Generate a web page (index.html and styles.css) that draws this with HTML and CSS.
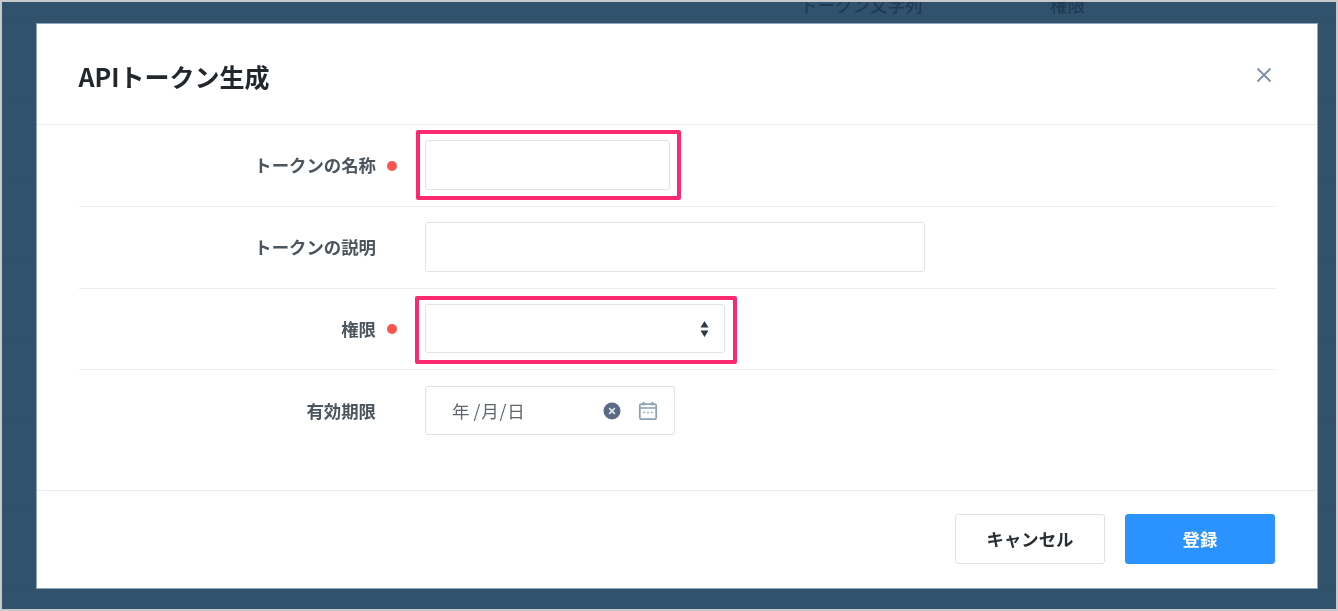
FILE: index.html
```html
<!DOCTYPE html>
<html lang="ja">
<head>
<meta charset="utf-8">
<title>APIトークン生成</title>
<link rel="stylesheet" href="styles.css">
</head>
<body>
<div class="screen">
  <div class="backdrop">
    <div class="table-head"><span class="col-token">トークン文字列</span><span class="col-perm">権限</span></div>
    <div class="table-row"></div>
    <div class="table-row"></div>
    <div class="table-row"></div>
    <div class="table-row"></div>
    <div class="table-row"></div>
    <div class="table-row"></div>
    <div class="table-row"></div>
  </div>
  <section class="modal">
    <header class="modal-head">
      <h1 class="modal-title">APIトークン生成</h1>
      <svg class="close" viewBox="0 0 16 16" width="16" height="16"><path d="M1.5 1.5 14.5 14.5M14.5 1.5 1.5 14.5" fill="none" stroke="currentColor" stroke-width="1.9"/></svg>
    </header>
    <div class="form">
      <div class="row">
        <div class="label"><span>トークンの名称</span><i class="req"></i></div>
        <div class="field field-name"></div>
        <div class="mark mark-name"></div>
      </div>
      <div class="row">
        <div class="label"><span>トークンの説明</span></div>
        <div class="field field-desc"></div>
      </div>
      <div class="row">
        <div class="label"><span>権限</span><i class="req"></i></div>
        <div class="field field-select">
          <svg class="updown" viewBox="0 0 9 16" width="9" height="16"><path d="M4.5 0 8.5 6.5H.5ZM.5 9.5H8.5L4.5 16Z" fill="currentColor"/></svg>
        </div>
        <div class="mark mark-select"></div>
      </div>
      <div class="row row-last">
        <div class="label"><span>有効期限</span></div>
        <div class="field field-date">
          <span class="date-text">年 /月/日</span>
          <svg class="date-clear" viewBox="0 0 18 18" width="18" height="18"><circle cx="9" cy="9" r="8.5" fill="#5b6a85"/><path d="M6.2 6.2 11.8 11.8M11.8 6.2 6.2 11.8" stroke="#dfe5ec" stroke-width="1.7" fill="none"/></svg>
          <svg class="date-cal" viewBox="0 0 20 20" width="20" height="20"><rect x="1.8" y="3.2" width="16.4" height="15" rx="1.5" fill="none" stroke="currentColor" stroke-width="1.7"/><path d="M1.8 7H18.2M5.6 .8V4.5M14.4 .8V4.5" fill="none" stroke="currentColor" stroke-width="1.7"/><path d="M5.5 11.5H7M9.2 11.5H10.8M13 11.5H14.5" fill="none" stroke="currentColor" stroke-width="1.4"/></svg>
        </div>
      </div>
    </div>
    <footer class="modal-foot">
      <button class="btn btn-cancel" type="button">キャンセル</button>
      <button class="btn btn-submit" type="button">登録</button>
    </footer>
  </section>
</div>
</body>
</html>
```
FILE: styles.css
```css
* { box-sizing: border-box; }
html, body { margin: 0; height: 611px; overflow: hidden; }
body {
  background: #c9c9c9;
  padding: 2px;
  font-family: "Noto Sans CJK JP", "Noto Sans", sans-serif;
}
.screen {
  position: relative;
  height: 607px;
  background: #31526c;
  overflow: hidden;
  filter: blur(0.45px);
}
.backdrop { color: #1d3b54; }
.table-head {
  display: flex;
  height: 26px;
  margin-top: -9px;
  padding-left: 798px;
  font-size: 17.5px;
  line-height: 24px;
  font-weight: 500;
  border-bottom: 1px solid #2f4e68;
}
.col-token { width: 250px; }
.table-row { height: 81px; border-bottom: 1px solid #2f4e68; }
.modal {
  position: absolute;
  left: 35px;
  top: 22px;
  width: 1280px;
  height: 564px;
  background: #fff;
  display: flex;
  flex-direction: column;
  box-shadow: 0 0 0 1px #8fa6ba;
}
.modal-head {
  flex: none;
  height: 101px;
  display: flex;
  align-items: center;
  justify-content: space-between;
  padding: 0 45px 0 41.5px;
  border-bottom: 1px solid #e9ebee;
}
.modal-title {
  margin: 0;
  font-size: 25px;
  font-weight: 700;
  line-height: 36px;
  color: #22272b;
  position: relative;
  top: 2px;
}
.close { color: #7d92a8; position: relative; top: 1px; }
.form { flex: none; height: 365px; padding: 0 42px; }
.row {
  position: relative;
  display: flex;
  align-items: flex-start;
  height: 81.8px;
  padding-top: 15.4px;
  border-bottom: 1px solid #e9ebee;
}
.row-last { border-bottom: 0; }
.label {
  position: relative;
  width: 297px;
  margin-right: 49px;
  height: 49px;
  display: flex;
  align-items: center;
  justify-content: flex-end;
  font-size: 17.4px;
  font-weight: 700;
  color: #4a555e;
}
.req {
  position: absolute;
  right: -20.5px;
  top: 20.5px;
  width: 10px;
  height: 10px;
  border-radius: 50%;
  background: #fb5450;
}
.field {
  height: 49.5px;
  border: 1px solid #dde3e9;
  border-radius: 3px;
  background: #fff;
  display: flex;
  align-items: center;
}
.field-name { width: 245px; }
.field-desc { width: 500px; }
.field-select { width: 300px; justify-content: flex-end; padding-right: 15px; }
.field-date { width: 250px; padding: 0 16px 0 26px; color: #5d666e; }
.updown { color: #2b3a46; }
.date-text { font-size: 17.5px; flex: 1; word-spacing: -1.5px; letter-spacing: 0.8px; white-space: nowrap; }
.date-clear { margin-right: 17px; }
.date-cal { color: #8aa0b6; }
.mark {
  position: absolute;
  border: 4px solid #fb2a6f;
  border-radius: 2px;
}
.mark-name { left: 337px; top: 5px; width: 265px; height: 70px; }
.mark-select { left: 336px; top: 7.4px; width: 322px; height: 68px; }
.modal-foot {
  flex: 1;
  display: flex;
  justify-content: flex-end;
  align-items: flex-start;
  gap: 20px;
  padding: 23px 42px 0;
  border-top: 1px solid #e9ebee;
}
.btn {
  width: 150px;
  height: 49.5px;
  border-radius: 3px;
  font-family: inherit;
  font-size: 17.4px;
  font-weight: 700;
  padding: 0;
}
.btn-cancel { background: #fff; border: 1px solid #dde3e9; color: #2a2f33; }
.btn-submit { background: #2a93ff; border: 1px solid #2a93ff; color: #fff; }
```
